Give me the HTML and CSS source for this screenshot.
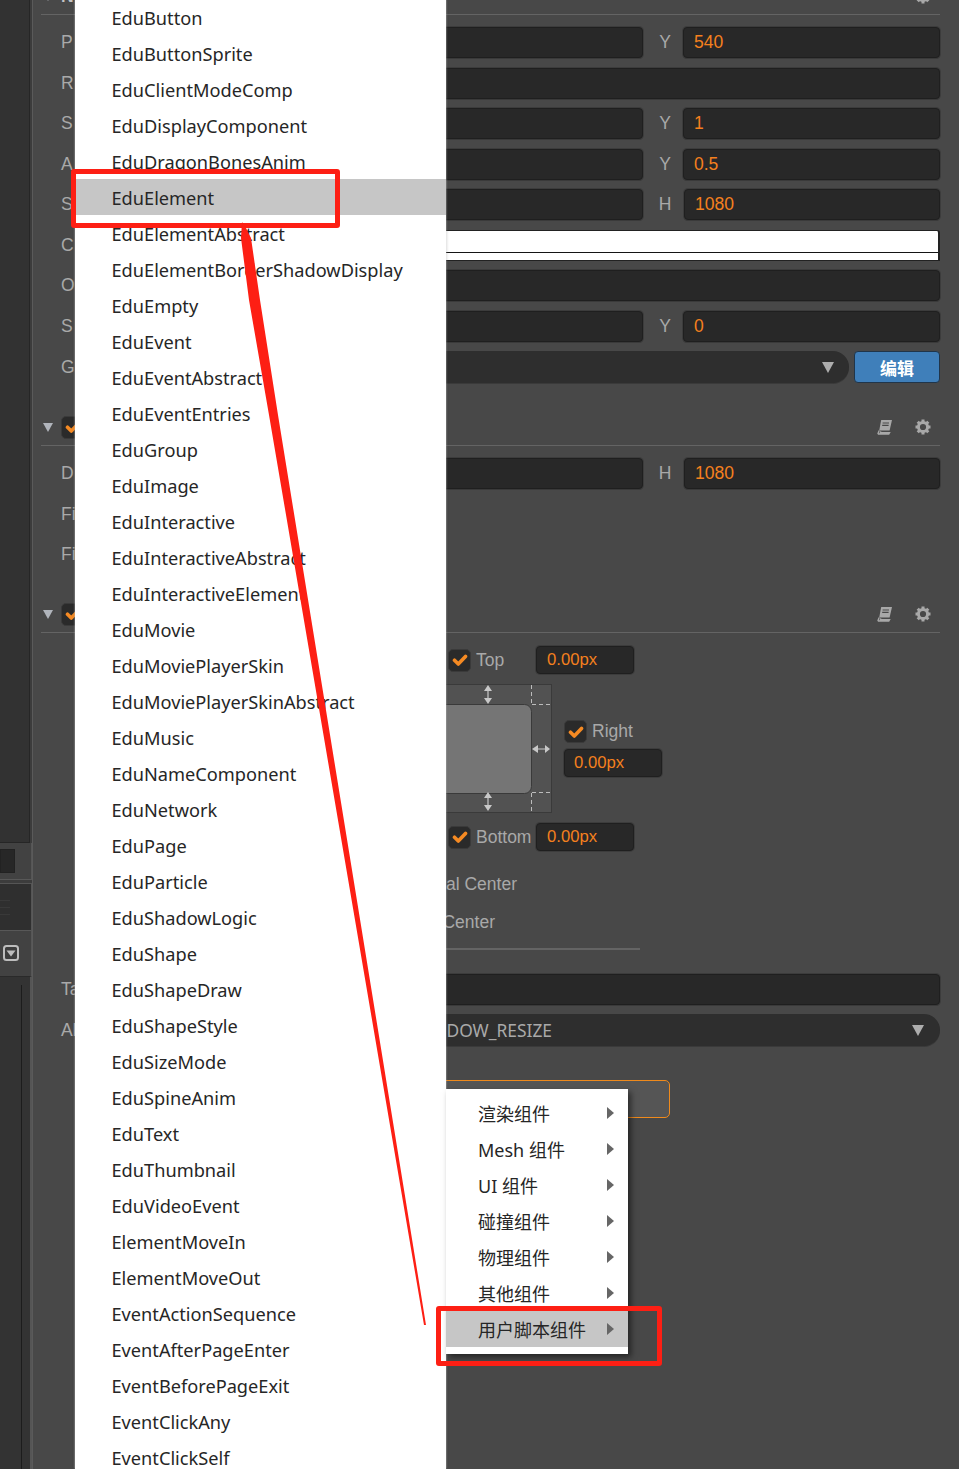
FILE: index.html
```html
<!DOCTYPE html>
<html lang="zh">
<head>
<meta charset="utf-8">
<title>Inspector</title>
<link rel="stylesheet" href="styles.css">
</head>
<body>
<div class="app">
  <aside class="rail">
    <div class="pane-top"></div>
    <div class="bar-a"><div class="bar-box"></div></div>
    <div class="pane-mid"><i></i><i></i><i></i></div>
    <div class="bar-b">
      <svg class="fold" viewBox="0 0 16 16" width="16" height="16"><rect x="1" y="1" width="14" height="14" rx="2.5" fill="#3d3d3d" stroke="#bdbdbd" stroke-width="2"/><path d="M3.5 5.5h9L8 11.5z" fill="#bdbdbd"/></svg>
    </div>
    <div class="pane-bottom"><div class="pane-line"></div></div>
  </aside>

  <main class="inspector">
    <section class="sec sec-node">
      <header class="head">
        <span class="tri"></span><span class="head-title">N</span>
        <span class="tools"><svg class="gear" viewBox="0 0 16 16" width="16" height="16"><use href="#gear"/></svg></span>
      </header>
      <div class="rows">
        <div class="row"><span class="lab">P</span><span class="input"></span><span class="sub">Y</span><span class="input val">540</span></div>
        <div class="row"><span class="lab">R</span><span class="input"></span></div>
        <div class="row"><span class="lab">S</span><span class="input"></span><span class="sub">Y</span><span class="input val">1</span></div>
        <div class="row"><span class="lab">A</span><span class="input"></span><span class="sub">Y</span><span class="input val">0.5</span></div>
        <div class="row"><span class="lab">S</span><span class="input"></span><span class="sub">H</span><span class="input val val-h">1080</span></div>
        <div class="row"><span class="lab">C</span><span class="color"><span class="alpha"></span></span></div>
        <div class="row"><span class="lab">O</span><span class="input"></span></div>
        <div class="row"><span class="lab">S</span><span class="input"></span><span class="sub">Y</span><span class="input val">0</span></div>
        <div class="row row-group"><span class="lab">G</span><span class="select select-short"><span class="caret"></span></span><span class="btn-edit">编辑</span></div>
      </div>
    </section>

    <section class="sec sec-canvas">
      <header class="head">
        <span class="tri"></span>
        <span class="check head-check"><svg viewBox="0 0 16 16" width="16" height="16"><use href="#tick"/></svg></span>
        <span class="tools">
          <svg viewBox="0 0 16 16" width="16" height="16"><use href="#book"/></svg>
          <svg viewBox="0 0 16 16" width="16" height="16"><use href="#gear"/></svg>
        </span>
      </header>
      <div class="rows">
        <div class="row"><span class="lab">D</span><span class="input"></span><span class="sub">H</span><span class="input val val-h">1080</span></div>
        <div class="row"><span class="lab">Fi</span></div>
        <div class="row"><span class="lab">Fi</span></div>
      </div>
    </section>

    <section class="sec sec-widget">
      <header class="head">
        <span class="tri"></span>
        <span class="check head-check"><svg viewBox="0 0 16 16" width="16" height="16"><use href="#tick"/></svg></span>
        <span class="tools">
          <svg viewBox="0 0 16 16" width="16" height="16"><use href="#book"/></svg>
          <svg viewBox="0 0 16 16" width="16" height="16"><use href="#gear"/></svg>
        </span>
      </header>
      <div class="widget">
        <div class="anchor-line">
          <span class="check"><svg viewBox="0 0 16 16" width="16" height="16"><use href="#tick"/></svg></span>
          <span class="anchor-lab anchor-top">Top</span>
          <span class="px">0.00px</span>
        </div>
        <div class="anchor-mid">
          <svg class="anchor-box" viewBox="0 0 128 129" width="128" height="129">
            <rect x=".5" y=".5" width="127" height="128" fill="#525252" stroke="#3a3a3a"/>
            <path d="M107.5 1V20M107.5 109V128M108 20.5H127M108 108.5H127" stroke="#bcbcbc" stroke-dasharray="4 3" fill="none"/>
            <rect x="8.500" y="20.500" width="99" height="89" rx="7" fill="#757575" stroke="#3a3a3a"/>
            <path d="M64 1l4 6h-3.400v7h3.400l-4 6-4-6h3.400V7h-3.400z" fill="#c8c8c8"/>
            <path d="M64 108l4 6h-3.400v7h3.400l-4 6-4-6h3.400v-7h-3.400z" fill="#c8c8c8"/>
            <path d="M108 65l6-4v3.400h7V61l5 4-5 4v-3.400h-7V69z" fill="#c8c8c8"/>
          </svg>
          <div class="anchor-right">
            <div class="anchor-rline">
              <span class="check"><svg viewBox="0 0 16 16" width="16" height="16"><use href="#tick"/></svg></span>
              <span class="anchor-lab">Right</span>
            </div>
            <span class="px px-right">0.00px</span>
          </div>
        </div>
        <div class="anchor-line">
          <span class="check"><svg viewBox="0 0 16 16" width="16" height="16"><use href="#tick"/></svg></span>
          <span class="anchor-lab anchor-bottom">Bottom</span>
          <span class="px">0.00px</span>
        </div>
      </div>
      <div class="center-row center-h">al Center</div>
      <div class="center-row center-v">Center</div>
      <div class="rule"></div>
      <div class="rows rows-target">
        <div class="row"><span class="lab">Ta</span><span class="input"></span></div>
        <div class="row row-align"><span class="lab">Al</span><span class="select"><span class="select-text">DOW_RESIZE</span><span class="caret"></span></span></div>
      </div>
      <div class="add-btn"></div>
    </section>
  </main>
</div>

<ul class="menu">
  <li>EduButton</li>
  <li>EduButtonSprite</li>
  <li>EduClientModeComp</li>
  <li>EduDisplayComponent</li>
  <li>EduDragonBonesAnim</li>
  <li class="on">EduElement</li>
  <li>EduElementAbstract</li>
  <li>EduElementBorderShadowDisplay</li>
  <li>EduEmpty</li>
  <li>EduEvent</li>
  <li>EduEventAbstract</li>
  <li>EduEventEntries</li>
  <li>EduGroup</li>
  <li>EduImage</li>
  <li>EduInteractive</li>
  <li>EduInteractiveAbstract</li>
  <li>EduInteractiveElement</li>
  <li>EduMovie</li>
  <li>EduMoviePlayerSkin</li>
  <li>EduMoviePlayerSkinAbstract</li>
  <li>EduMusic</li>
  <li>EduNameComponent</li>
  <li>EduNetwork</li>
  <li>EduPage</li>
  <li>EduParticle</li>
  <li>EduShadowLogic</li>
  <li>EduShape</li>
  <li>EduShapeDraw</li>
  <li>EduShapeStyle</li>
  <li>EduSizeMode</li>
  <li>EduSpineAnim</li>
  <li>EduText</li>
  <li>EduThumbnail</li>
  <li>EduVideoEvent</li>
  <li>ElementMoveIn</li>
  <li>ElementMoveOut</li>
  <li>EventActionSequence</li>
  <li>EventAfterPageEnter</li>
  <li>EventBeforePageExit</li>
  <li>EventClickAny</li>
  <li>EventClickSelf</li>
</ul>

<ul class="submenu">
  <li>渲染组件</li>
  <li>Mesh 组件</li>
  <li>UI 组件</li>
  <li>碰撞组件</li>
  <li>物理组件</li>
  <li>其他组件</li>
  <li class="on">用户脚本组件</li>
</ul>

<div class="mark mark-a"></div>
<div class="mark mark-b"></div>
<svg class="pointer" viewBox="0 0 959 1469" width="959" height="1469">
  <polygon points="242,222 246,228 251,238 260,300 278,415 426,1325 424,1325 269,415 249,300 241,238" fill="#fd1f14"/>
</svg>

<svg class="defs" width="0" height="0">
  <defs>
    <g id="tick"><path d="M2.500 8.200l3.800 3.800 7.200-7.600" fill="none" stroke="#f58a23" stroke-width="3.600" stroke-linecap="round" stroke-linejoin="round"/></g>
    <g id="gear"><circle cx="8" cy="8" r="4.600" fill="none" stroke="#a8a8a8" stroke-width="3"/><path d="M8 .5v3M8 12.500v3M.5 8h3M12.500 8h3M2.700 2.700l2.100 2.100M11.200 11.200l2.100 2.100M2.700 13.300l2.100-2.100M11.200 4.800l2.100-2.100" stroke="#a8a8a8" stroke-width="3"/></g>
    <g id="book"><path d="M4.200 1H15l-2.400 10.500H2.200z" fill="#a8a8a8"/><path d="M2.200 11.500L1 14.400 1.400 15h10.400l.8-1.400H3.400l.4-1.200" fill="none" stroke="#a8a8a8" stroke-width="1.300"/><path d="M5.600 4h6.400M5.200 6.400h6.400" stroke="#484848" stroke-width="1.200"/></g>
  </defs>
</svg>
</body>
</html>
```

FILE: styles.css
```css
* { box-sizing: border-box; }
html, body { margin: 0; padding: 0; height: 1469px; overflow: hidden; }
body {
  position: relative;
  background: #484848;
  font-family: "Liberation Sans", Arial, sans-serif;
  font-size: 17.5px;
  color: #a9a9a9;
}
.app { display: flex; height: 1469px; overflow: hidden; }

/* left rail */
.rail {
  width: 33px;
  flex: none;
  display: flex;
  flex-direction: column;
  background: #3c3c3c;
  border-right: 1px solid #5a5a5a;
}
.pane-top { height: 843px; width: 30px; background: #323232; border-right: 1px solid #262626; border-bottom: 1px solid #262626; }
.bar-a { height: 37px; display: flex; align-items: center; background: #424242; border-right: 1px solid #565656; border-bottom: 1px solid #585858; }
.bar-box { width: 15px; height: 24px; background: #272727; border: 1px solid #222; }
.pane-mid {
  height: 48px;
  margin-top: 3px;
  background: #2f2f2f;
  border-top: 1px solid #555;
  border-right: 1px solid #555;
  border-bottom: 1px solid #585858;
  display: flex;
  flex-direction: column;
  gap: 6px;
  padding-top: 16px;
}
.pane-mid i { display: block; width: 10px; height: 1px; background: #393939; }
.bar-b { height: 45px; display: flex; align-items: center; padding: 0 0 2px 3px; background: #424242; border-right: 1px solid #565656; }
.fold { display: block; }
.pane-bottom { flex: 1; background: #333; border-top: 1px solid #2a2a2a; border-right: 2px solid #555; padding-top: 8px; }
.pane-line { width: 22px; height: 100%; border-right: 1px solid #1c1c1c; }

/* inspector */
.inspector { flex: 1; min-width: 0; padding: 0 19px 0 8px; }
.sec-node { margin-top: -17px; }
.sec-canvas { margin-top: 31px; }
.sec-widget { margin-top: 31px; }
.head {
  height: 32px;
  display: flex;
  align-items: center;
  padding: 0 9px 5px 2px;
  border-bottom: 1px solid #646464;
}
.head-title { margin-left: 8px; color: #c4c4c4; font-weight: bold; }
.tri { width: 0; height: 0; border-left: 5px solid transparent; border-right: 5px solid transparent; border-top: 9px solid #b0b4bb; }
.head-check { margin-left: 8px; }
.tools { margin-left: auto; display: flex; gap: 22px; align-items: center; }
.rows { display: flex; flex-direction: column; gap: 9.5px; padding-top: 12px; }
.row { height: 31px; display: flex; align-items: center; }
.lab { width: 109px; flex: none; padding-left: 20px; white-space: nowrap; }
.input {
  flex: 1;
  height: 100%;
  display: flex;
  align-items: center;
  padding-left: 10px;
  background: #282828;
  border: 1px solid #1f1f1f;
  border-radius: 4px;
  box-shadow: 0 1px 0 #3a3a3a, 0 0 0 1px #3c3c3c;
}
.val { flex: none; width: 257px; color: #f5801e; }
.val-h { width: 256px; }
.sub { flex: none; width: 40px; padding-left: 4px; text-align: center; }
.sub + .val-h { margin-left: 1px; }
.color {
  flex: 1;
  height: 100%;
  display: flex;
  flex-direction: column;
  justify-content: flex-end;
  background: #fff;
  border: 1px solid #222;
  border-right-width: 2px;
  border-radius: 3px 3px 0 0;
}
.alpha { display: block; height: 8px; border-top: 1px solid #151515; }
.select {
  flex: 1;
  height: 32px;
  display: flex;
  align-items: center;
  background: #2e2e2e;
  border-radius: 5px 16px 16px 5px;
  box-shadow: 0 1px 0 #3a3a3a;
}
.select-short { flex: none; width: 700px; justify-content: flex-end; padding-right: 15px; }
.row-group { height: 32px; gap: 5px; }
.row-group .lab { width: 103px; }
.caret { width: 0; height: 0; border-left: 6px solid transparent; border-right: 6px solid transparent; border-top: 11px solid #adadad; }
.btn-edit {
  flex: 1;
  height: 32px;
  display: flex;
  align-items: center;
  justify-content: center;
  background: #3f7fba;
  border: 1px solid #20354a;
  border-radius: 4px;
  color: #fff;
  font-family: "Noto Sans CJK SC", sans-serif;
  font-weight: bold;
  font-size: 17px;
}
.select-text {
  width: 402px;
  flex: none;
  text-align: right;
  font-family: "Noto Sans", sans-serif;
  font-size: 17.4px;
  white-space: nowrap;
}
.row-align { height: 32px; }
.row-align .caret { margin-left: auto; margin-right: 16px; }

/* widget */
.widget { padding: 13px 0 0 407px; display: flex; flex-direction: column; gap: 10px; }
.anchor-line { height: 28px; display: flex; align-items: center; }
.check {
  width: 23px;
  height: 23px;
  flex: none;
  display: flex;
  align-items: center;
  justify-content: center;
  background: #2a2a2a;
  border: 1px solid #3a3a3a;
  border-radius: 5px;
}
.anchor-lab { margin-left: 5px; }
.anchor-top { width: 60px; }
.anchor-bottom { width: 60px; }
.px {
  width: 98px;
  height: 28px;
  display: flex;
  align-items: center;
  padding-left: 10px;
  background: #282828;
  border: 1px solid #1f1f1f;
  border-radius: 4px;
  box-shadow: 0 0 0 1px #3c3c3c;
  color: #f5801e;
  font-size: 16.7px;
}
.px-right { padding-left: 9px; }
.anchor-mid { display: flex; align-items: center; margin-left: -24px; height: 129px; }
.anchor-box { display: block; flex: none; }
.anchor-right { margin-left: 12px; display: flex; flex-direction: column; gap: 6px; }
.anchor-rline { display: flex; align-items: center; height: 23px; }
.center-row { height: 38px; line-height: 38px; text-align: right; }
.center-h { width: 476px; margin-top: 14px; }
.center-v { width: 454px; }
.rule { width: 299px; height: 2px; margin: 7px 0 0 300px; background: #646464; }
.rows-target { padding-top: 24px; gap: 9px; }
.add-btn {
  margin: 34px 0 0 100px;
  width: 529px;
  height: 38px;
  background: #555;
  border: 1px solid #ef8a1c;
  border-radius: 5px;
}

/* menus */
.menu, .submenu { margin: 0; padding: 0; list-style: none; position: absolute; color: #262626; font-family: "Noto Sans", "Noto Sans CJK SC", sans-serif; font-size: 18.2px; }
.menu {
  left: 75px;
  top: -1px;
  width: 371px;
  height: 1470px;
  overflow: hidden;
  background: #fff;
  box-shadow: 0 0 2px rgba(255,255,255,.7), 0 0 3px rgba(0,0,0,.3);
}
.menu li { height: 36px; line-height: 38px; padding-left: 36.5px; white-space: nowrap; }
.menu li.on, .submenu li.on { background: #c6c6c6; }
.submenu {
  left: 446px;
  top: 1089px;
  width: 182px;
  padding: 6px 0 7px;
  background: #fff;
  box-shadow: 3px 3px 6px rgba(0,0,0,.5);
}
.submenu li { position: relative; height: 36px; line-height: 38px; padding-left: 32px; white-space: nowrap; font-size: 18px; }
.submenu li::after {
  content: "";
  position: absolute;
  right: 14px;
  top: 12px;
  border-left: 7px solid #666;
  border-top: 6px solid transparent;
  border-bottom: 6px solid transparent;
}

/* annotations */
.mark { position: absolute; border: 5px solid #fd1f14; border-radius: 3px; }
.mark-a { left: 71px; top: 169px; width: 269px; height: 59px; }
.mark-b { left: 436px; top: 1306px; width: 226px; height: 60px; }
.pointer { position: absolute; left: 0; top: 0; pointer-events: none; }
.defs { position: absolute; }
```
